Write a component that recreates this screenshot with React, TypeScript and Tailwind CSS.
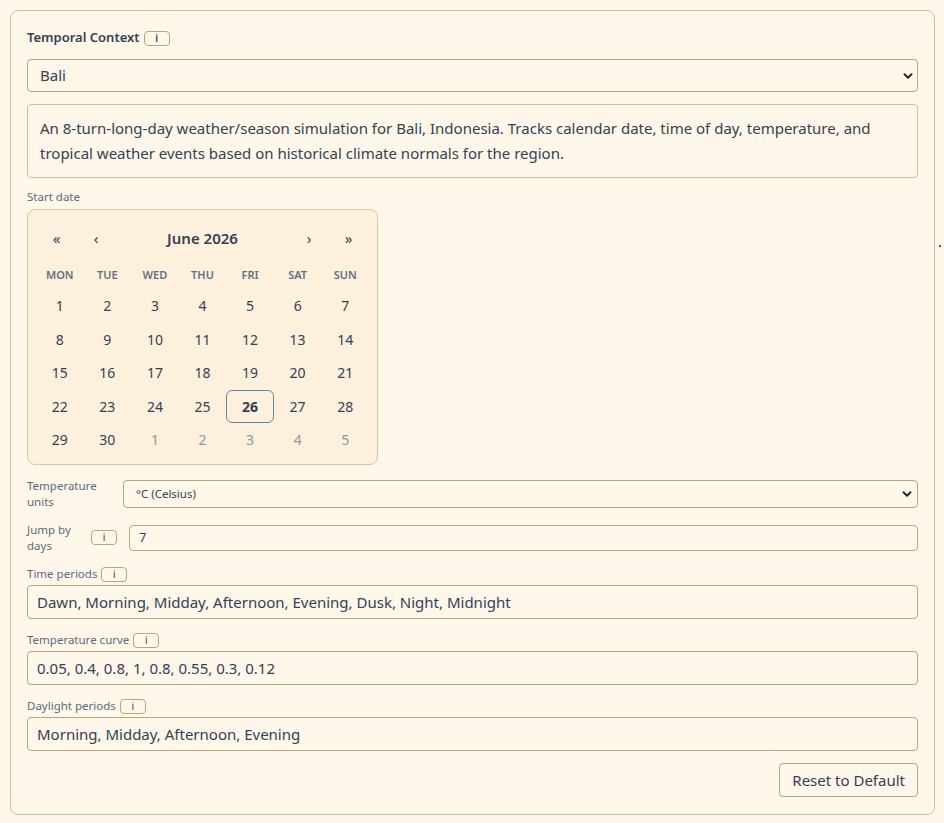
import * as React from "react"

const font = { fontFamily: '"Noto Sans", "Open Sans", sans-serif' }

function InfoButton({ className = "" }: { className?: string }) {
  return (
    <button
      type="button"
      className={`inline-flex h-[15px] w-[26px] items-center justify-center rounded-[4px] border border-[#bba57a] bg-[#fef7ea] text-[10px] leading-none text-[#334155] ${className}`}
    >
      i
    </button>
  )
}

function Chevron() {
  return (
    <svg width="12" height="12" viewBox="0 0 12 12" className="text-[#1f2a37]">
      <path d="M2.5 4.2 6 7.7 9.5 4.2" fill="none" stroke="currentColor" strokeWidth="2" strokeLinecap="round" strokeLinejoin="round" />
    </svg>
  )
}

const weekdays = ["MON", "TUE", "WED", "THU", "FRI", "SAT", "SUN"]

function Calendar() {
  const days: { n: number; muted?: boolean; selected?: boolean }[] = []
  for (let i = 1; i <= 30; i++) days.push({ n: i, selected: i === 26 })
  for (let i = 1; i <= 5; i++) days.push({ n: i, muted: true })

  return (
    <div className="w-[351px] rounded-[8px] border border-[#dcc7a0] bg-[#fdf0dc] px-[8px] pb-[8px] pt-[15px]">
      <div className="flex h-[26px] items-center text-[15px] text-[#334155]">
        <span className="w-[41px] text-center">«</span>
        <span className="w-[38px] text-center">‹</span>
        <span className="flex-1 text-center font-semibold">June 2026</span>
        <span className="w-[38px] text-center">›</span>
        <span className="w-[41px] text-center">»</span>
      </div>
      <div className="mt-[14px] grid grid-cols-7">
        {weekdays.map((d) => (
          <div key={d} className="flex h-[20px] items-center justify-center text-[11px] font-semibold text-[#5f7285]">
            {d}
          </div>
        ))}
      </div>
      <div className="mt-[4px] grid grid-cols-7 gap-y-[0.5px]">
        {days.map((d, i) => (
          <div
            key={i}
            className={`flex h-[33px] items-center justify-center text-[14px] ${
              d.selected
                ? "rounded-[6px] border border-[#5d88ab] font-bold text-[#334155]"
                : d.muted
                ? "text-[#8a98a8]"
                : "text-[#334155]"
            }`}
          >
            {d.n}
          </div>
        ))}
      </div>
    </div>
  )
}

function TextField({ label, value, className = "" }: { label: string; value: string; className?: string }) {
  return (
    <div className={className}>
      <div className="flex h-[18px] items-center gap-[4px] text-[11.5px] text-[#5b6b7e]">
        <span>{label}</span>
        <InfoButton />
      </div>
      <div className="mt-[2px] flex h-[34px] items-center rounded-[4px] border border-[#bba57a] px-[9px] text-[15px] text-[#334155]">
        {value}
      </div>
    </div>
  )
}

export default function App() {
  return (
    <div className="relative min-h-[823px] bg-[#fef7ea] pl-[10px] pr-[9px] pt-[10px]" style={font}>
      <div className="absolute left-[939px] top-[245px] h-[2px] w-[2px] bg-[#e0201a]" />
      <div className="rounded-[8px] border border-[#d4bf94] pb-[17px] pl-[16px] pr-[16px] pt-[18px]">
        <div className="flex h-[18px] items-center gap-[4px] text-[13px] font-semibold text-[#334155]">
          <span>Temporal Context</span>
          <InfoButton />
        </div>

        <div className="mt-[12px] flex h-[33px] items-center justify-between rounded-[4px] border border-[#bba57a] pl-[12px] pr-[3px] text-[15px] text-[#334155]">
          <span>Bali</span>
          <Chevron />
        </div>

        <div className="mt-[12px] rounded-[4px] border border-[#d4bf94] px-[12px] py-[11px] text-[15px] leading-[25px] text-[#334155]">
          An 8-turn-long-day weather/season simulation for Bali, Indonesia. Tracks calendar date, time of day,
          temperature, and tropical weather events based on historical climate normals for the region.
        </div>

        <div className="mt-[11px] text-[11.5px] leading-[16px] text-[#5b6b7e]">Start date</div>
        <div className="mt-[4px]">
          <Calendar />
        </div>

        <div className="mt-[13px] flex items-center gap-[8px]">
          <div className="w-[88px] text-[11.5px] leading-[16px] text-[#5b6b7e]">
            Temperature
            <br />
            units
          </div>
          <div className="flex h-[28px] flex-1 items-center justify-between rounded-[4px] border border-[#bba57a] pl-[12px] pr-[4px] text-[11.5px] text-[#334155]">
            <span>°C (Celsius)</span>
            <Chevron />
          </div>
        </div>

        <div className="mt-[12px] flex items-center">
          <div className="w-[64px] text-[11.5px] leading-[16px] text-[#5b6b7e]">
            Jump by
            <br />
            days
          </div>
          <InfoButton className="-mt-[2px]" />
          <div className="ml-[12px] flex h-[26px] flex-1 items-center rounded-[4px] border border-[#bba57a] px-[9px] text-[13px] text-[#334155]">
            7
          </div>
        </div>

        <TextField className="mt-[11px]" label="Time periods" value="Dawn, Morning, Midday, Afternoon, Evening, Dusk, Night, Midnight" />
        <TextField className="mt-[12px]" label="Temperature curve" value="0.05, 0.4, 0.8, 1, 0.8, 0.55, 0.3, 0.12" />
        <TextField className="mt-[12px]" label="Daylight periods" value="Morning, Midday, Afternoon, Evening" />

        <div className="mt-[12px] flex justify-end">
          <button
            type="button"
            className="h-[34px] rounded-[4px] border border-[#bba57a] px-[12px] text-[15px] text-[#334155]"
          >
            Reset to Default
          </button>
        </div>
      </div>
    </div>
  )
}
